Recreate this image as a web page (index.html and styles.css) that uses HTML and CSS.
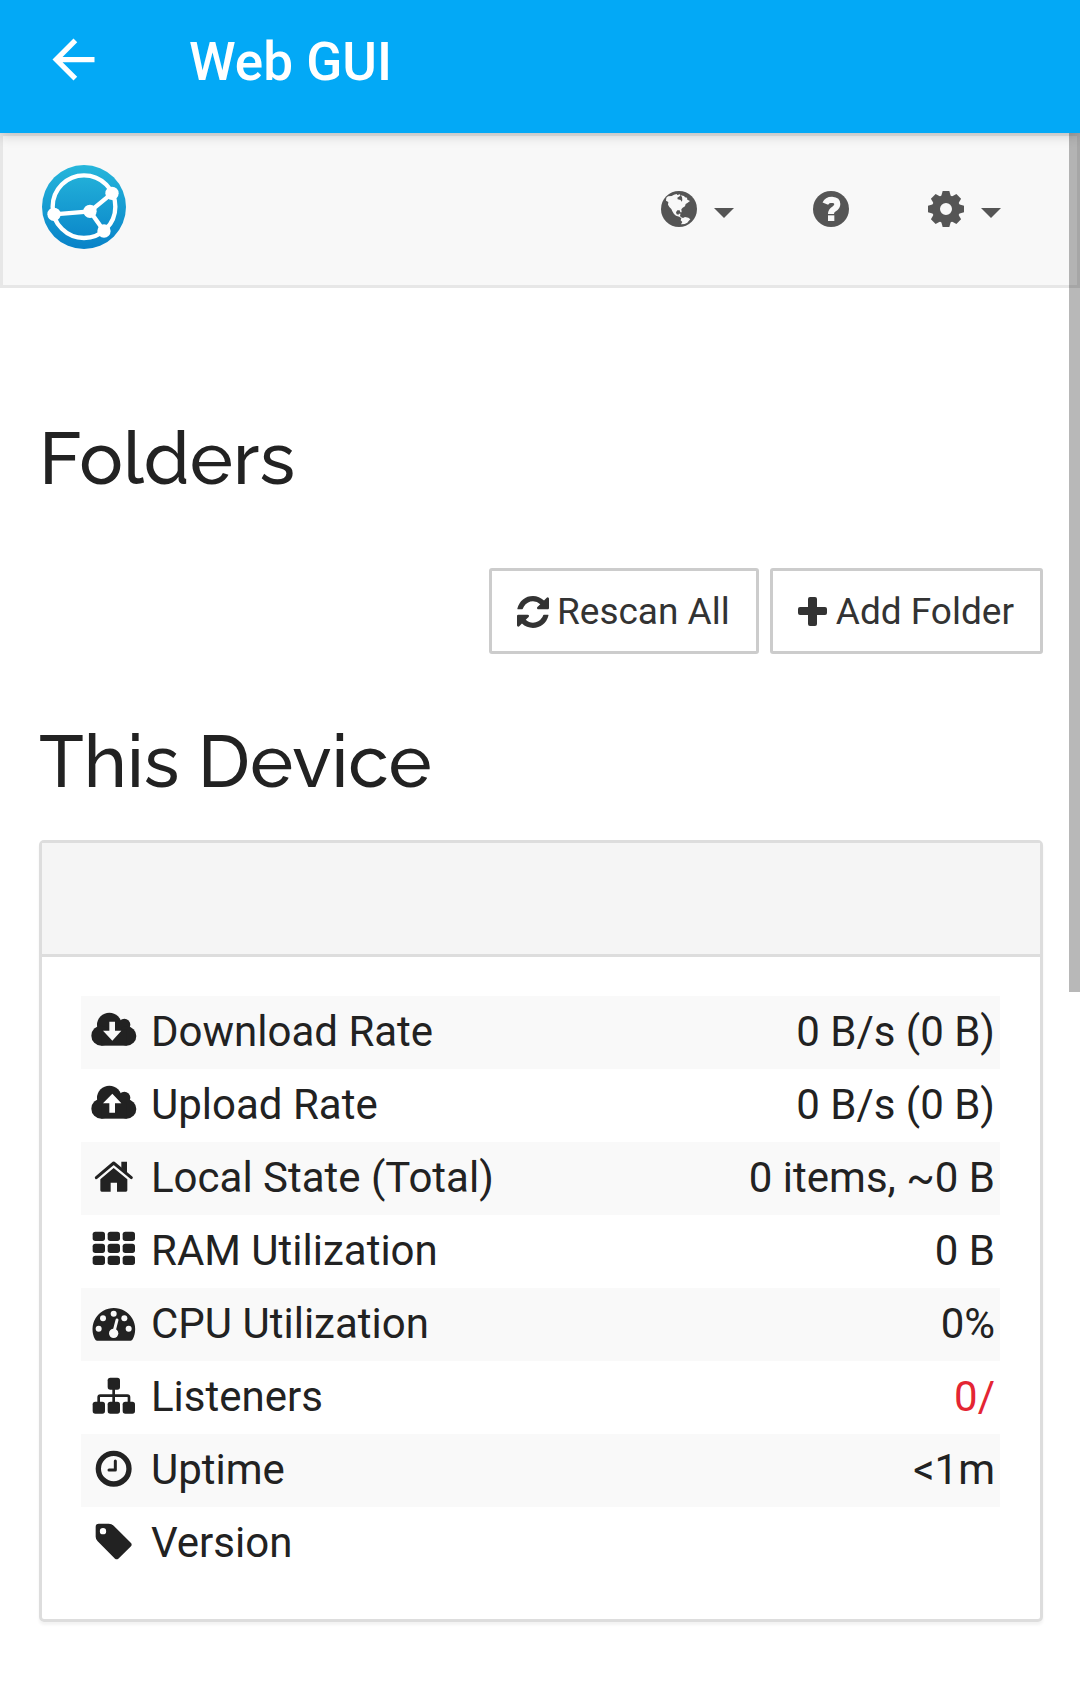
FILE: index.html
```html
<!DOCTYPE html>
<html lang="en">
<head>
<meta charset="utf-8">
<meta name="viewport" content="width=device-width">
<title>Web GUI</title>
<link rel="stylesheet" href="styles.css">
</head>
<body>
<header class="appbar">
  <button class="plain" type="button" aria-label="Back">
    <svg class="back-icon" viewBox="0 0 24 24"><path fill="#fff" d="M20 11H7.83l5.59-5.59L12 4l-8 8 8 8 1.41-1.41L7.83 13H20v-2z"/></svg>
  </button>
  <h1 class="appbar-title">Web GUI</h1>
</header>

<div class="page">
  <nav class="navbar">
    <a class="brand" href="#" aria-label="Syncthing">
      <svg class="logo" viewBox="66 75 252 252">
        <defs><linearGradient id="brand-fill" x1="0" y1="0" x2="0" y2="1"><stop offset="0" stop-color="#26b6db"/><stop offset="1" stop-color="#0882c8"/></linearGradient></defs>
        <circle cx="192" cy="201" r="126" fill="url(#brand-fill)"/>
        <g fill="none" stroke="#fff" stroke-width="13"><circle cx="192" cy="200" r="94"/><path d="M102 223L210 214L276 160M210 214L252 273"/></g>
        <g fill="#fff"><circle cx="276" cy="160" r="20"/><circle cx="102" cy="223" r="20"/><circle cx="210" cy="214" r="20"/><circle cx="252" cy="273" r="20"/></g>
      </svg>
    </a>
    <div class="nav-items">
      <button class="plain nav-item" type="button" aria-label="Language">
        <svg class="nav-icon" viewBox="352 273 108 108"><circle cx="406" cy="327" r="54" fill="#555"/><path fill="#f8f8f8" d="M368 293L373 289L384 288L391 284L399 282L401 285L409 283L410 287L401 293L402 298L411 300L413 305L416 301L415 291L411 286L421 288L424 292L430 293L431 299L439 303L431 309L426 312L424 319L417 323L413 328L414 337L410 337L408 331L401 331L397 337L399 343L405 344L405 341L411 341L409 346L411 351L418 354L424 351L434 353L440 358L435 363L431 368L423 372L412 373L416 366L411 361L413 355L407 350L397 347L391 342L386 334L383 327L377 321L373 314L374 306L367 302Z"/></svg>
        <svg class="caret" viewBox="0 0 20 36"><path fill="#555" d="M0 17H20L10 27Z"/></svg>
      </button>
      <button class="plain nav-item" type="button" aria-label="Help">
        <svg class="nav-icon" viewBox="519 63 108 108"><circle cx="573" cy="117" r="54" fill="#555"/><path fill="none" stroke="#f8f8f8" stroke-width="18" d="M556 101Q561 89 576 89Q592 90 592 102Q592 111 582 117Q573 122 573 132"/><path fill="#f8f8f8" d="M564 136H583V153H564Z"/></svg>
      </button>
      <button class="plain nav-item" type="button" aria-label="Actions">
        <svg class="nav-icon" viewBox="-54 -54 108 108">
          <defs><path id="tooth" d="M-15 -36L-10 -54H10L15 -36Z"/></defs>
          <g fill="#555"><use href="#tooth"/><use href="#tooth" transform="rotate(45)"/><use href="#tooth" transform="rotate(90)"/><use href="#tooth" transform="rotate(135)"/><use href="#tooth" transform="rotate(180)"/><use href="#tooth" transform="rotate(225)"/><use href="#tooth" transform="rotate(270)"/><use href="#tooth" transform="rotate(315)"/></g>
          <circle r="30" fill="none" stroke="#555" stroke-width="24"/>
        </svg>
        <svg class="caret" viewBox="0 0 20 36"><path fill="#555" d="M0 17H20L10 27Z"/></svg>
      </button>
    </div>
  </nav>

  <main class="content">
    <h2 class="section-title">Folders</h2>
    <div class="actions">
      <button class="btn" type="button">
        <svg class="btn-icon" viewBox="0 0 1536 1536"><path fill="#333" d="M1511 928q0 5-1 7-64 268-268 434.500T764 1536q-146 0-282.500-55T238 1324l-129 129q-19 19-45 19t-45-19-19-45V960q0-26 19-45t45-19h448q26 0 45 19t19 45-19 45l-137 137q71 66 161 102t187 36q134 0 250-65t186-179q11-17 53-117 8-23 30-23h192q13 0 22.500 9.500t9.500 22.500zm25-800v448q0 26-19 45t-45 19h-448q-26 0-45-19t-19-45 19-45l138-138Q969 256 768 256q-134 0-250 65T332 500q-11 17-53 117-8 23-30 23H50q-13 0-22.500-9.500T18 608v-7q65-268 270-434.500T768 0q146 0 284 55.500T1297 212l130-129q19-19 45-19t45 19 19 45z"/></svg>
        Rescan All
      </button>
      <button class="btn" type="button">
        <svg class="btn-icon plus" viewBox="0 0 30 32"><path fill="#333" d="M12 1h5q2 0 2 2v8h8q2 0 2 2v4q0 2-2 2h-8v9q0 2-2 2h-5q-2 0-2-2v-9H2q-2 0-2-2v-4q0-2 2-2h8V3q0-2 2-2z"/></svg>
        Add Folder
      </button>
    </div>

    <h2 class="section-title">This Device</h2>
    <section class="panel">
      <div class="panel-heading"></div>
      <div class="panel-body">
        <table class="stats">
          <tr>
            <th scope="row"><span class="label"><svg class="row-icon" viewBox="21 34 162 126"><g fill="#222"><circle cx="88" cy="76" r="37"/><circle cx="133" cy="75" r="18"/><circle cx="140" cy="109" r="29"/><circle cx="64" cy="108" r="30"/><path d="M64 90H140V138H64Z"/></g><path fill="#f9f9f9" d="M88 66H105V93H124L97 123L69 93H88Z"/></svg>Download Rate</span></th>
            <td>0 B/s (0 B)</td>
          </tr>
          <tr>
            <th scope="row"><span class="label"><svg class="row-icon" viewBox="21 34 162 126"><g fill="#222"><circle cx="88" cy="76" r="37"/><circle cx="133" cy="75" r="18"/><circle cx="140" cy="109" r="29"/><circle cx="64" cy="108" r="30"/><path d="M64 90H140V138H64Z"/></g><path fill="#fff" d="M88 120H105V92H124L97 63L69 92H88Z"/></svg>Upload Rate</span></th>
            <td>0 B/s (0 B)</td>
          </tr>
          <tr>
            <th scope="row"><span class="label"><svg class="row-icon" viewBox="21 472 162 126"><path fill="none" stroke="#222" stroke-width="9" stroke-linecap="round" stroke-linejoin="round" d="M49 534L101 490L154 534"/><path fill="#222" d="M124 486H141V520L124 505ZM101 505L142 539V572Q142 576 138 576H111V549H92V576H65Q61 576 61 572V539Z"/></svg>Local State (Total)</span></th>
            <td>0 items, ~0 B</td>
          </tr>
          <tr>
            <th scope="row"><span class="label"><svg class="row-icon" viewBox="21 691 162 126"><g fill="#222"><rect x="38" y="696" width="37" height="28" rx="8"/><rect x="83" y="696" width="37" height="28" rx="8"/><rect x="128" y="696" width="37" height="28" rx="8"/><rect x="38" y="732" width="37" height="28" rx="8"/><rect x="83" y="732" width="37" height="28" rx="8"/><rect x="128" y="732" width="37" height="28" rx="8"/><rect x="38" y="768" width="37" height="28" rx="8"/><rect x="83" y="768" width="37" height="28" rx="8"/><rect x="128" y="768" width="37" height="28" rx="8"/></g></svg>RAM Utilization</span></th>
            <td>0 B</td>
          </tr>
          <tr>
            <th scope="row"><span class="label"><svg class="row-icon" viewBox="21 40 162 126"><path fill="#222" d="M51 153Q47 153 45 149A64 64 0 1 1 158 149Q156 153 152 153Z"/><g fill="#f9f9f9"><circle cx="101" cy="72" r="9"/><circle cx="69" cy="86" r="9"/><circle cx="133" cy="86" r="9"/><circle cx="56" cy="117" r="9"/><circle cx="146" cy="117" r="9"/><circle cx="101" cy="131" r="14"/></g><path stroke="#f9f9f9" stroke-width="9" stroke-linecap="round" d="M102 126L111 91"/></svg>CPU Utilization</span></th>
            <td>0%</td>
          </tr>
          <tr>
            <th scope="row"><span class="label"><svg class="row-icon" viewBox="21 259 162 126"><g fill="#222"><rect x="83" y="264" width="37" height="36" rx="8"/><rect x="38" y="336" width="37" height="36" rx="8"/><rect x="83" y="336" width="37" height="36" rx="8"/><rect x="128" y="336" width="37" height="36" rx="8"/></g><path fill="none" stroke="#222" stroke-width="8" d="M101 298V338M56 338V323Q56 318 61 318H142Q147 318 147 323V338"/></svg>Listeners</span></th>
            <td class="danger">0/</td>
          </tr>
          <tr>
            <th scope="row"><span class="label"><svg class="row-icon" viewBox="21 478 162 126"><circle cx="101" cy="537" r="46" fill="none" stroke="#222" stroke-width="16"/><path fill="none" stroke="#222" stroke-width="9" stroke-linecap="round" stroke-linejoin="round" d="M106 514V541H87"/></svg>Uptime</span></th>
            <td>&lt;1m</td>
          </tr>
          <tr>
            <th scope="row"><span class="label"><svg class="row-icon" viewBox="21 697 162 126"><path fill="#222" fill-rule="evenodd" d="M56 702H86Q95 702 101 708L153 760Q157 765 153 770L115 807Q110 811 105 807L53 755Q47 749 47 741V711Q47 702 56 702ZM69 715A9.500 9.500 0 1 0 69 734A9.500 9.500 0 1 0 69 715Z"/></svg>Version</span></th>
            <td></td>
          </tr>
        </table>
      </div>
    </section>
  </main>
  <div class="scroll-thumb"></div>
</div>
</body>
</html>
```
FILE: styles.css
```css
* {
  box-sizing: border-box;
}

body {
  margin: 0;
  background: #fff;
  color: #222;
  font-family: Roboto, "Liberation Sans", sans-serif;
  font-size: 42px;
  line-height: 60px;
}

svg {
  display: block;
  flex: none;
}

.plain {
  margin: 0;
  padding: 0;
  border: 0;
  background: none;
  cursor: pointer;
}

/* App bar */
.appbar {
  position: relative;
  z-index: 1;
  display: flex;
  align-items: center;
  gap: 84px;
  padding: 28px 42px 42px;
  background: #03a9f6;
  box-shadow: 0 2px 12px rgba(0, 0, 0, 0.2);
}

.back-icon {
  width: 63px;
  height: 63px;
}

.appbar-title {
  margin: 0;
  padding-top: 4px;
  color: #fff;
  font-size: 53px;
  font-weight: 500;
  line-height: 56px;
}

/* Navigation */
.page {
  position: relative;
}

.navbar {
  display: flex;
  justify-content: space-between;
  align-items: flex-start;
  padding: 29px 76px 36px 39px;
  border: 3px solid #e7e7e7;
  background: #f8f8f8;
}

.logo {
  width: 84px;
  height: 84px;
}

.nav-items {
  display: flex;
  gap: 79px;
  padding-top: 26px;
}

.nav-item {
  display: flex;
  gap: 17px;
}

.nav-icon {
  width: 36px;
  height: 36px;
}

.caret {
  width: 20px;
  height: 36px;
}

/* Content */
.content {
  padding: 130px 37px 77px 39px;
}

.section-title {
  margin: 0;
  font-family: Raleway, Lato, sans-serif;
  font-size: 73px;
  font-weight: 500;
  line-height: 80px;
}

.actions {
  display: flex;
  justify-content: flex-end;
  gap: 11px;
  margin: 70px 0 67px;
}

.btn {
  display: flex;
  align-items: center;
  gap: 8px;
  padding: 14px 26px 12px 25px;
  border: 3px solid #ccc;
  border-radius: 3px;
  background: #fff;
  color: #333;
  font-family: inherit;
  font-size: 37px;
  line-height: 54px;
  cursor: pointer;
}

.btn-icon {
  width: 32px;
  height: 32px;
}

.plus {
  width: 30px;
}

/* Device panel */
.panel {
  margin-top: 39px;
  border: 3px solid #ddd;
  border-radius: 5px;
  box-shadow: 0 3px 3px rgba(0, 0, 0, 0.05);
}

.panel-heading {
  height: 114px;
  border-bottom: 3px solid #ddd;
  background: #f5f5f5;
}

.panel-body {
  padding: 39px 40px 39px 39px;
}

.stats {
  width: 100%;
  border-collapse: collapse;
}

.stats tr:nth-child(odd) {
  background: #f9f9f9;
}

.stats th,
.stats td {
  height: 73px;
  padding: 0 5px 2px 6px;
  font-weight: 400;
  text-align: left;
  white-space: nowrap;
}

.stats td {
  text-align: right;
}

.stats .danger {
  color: #e42533;
}

.label {
  display: flex;
  align-items: center;
  gap: 10px;
}

.row-icon {
  width: 54px;
  height: 42px;
}

/* Scroll thumb laid over the page edge */
.scroll-thumb {
  position: absolute;
  top: 0;
  right: 0;
  width: 11px;
  height: 859px;
  background: rgba(0, 0, 0, 0.28);
}
```
